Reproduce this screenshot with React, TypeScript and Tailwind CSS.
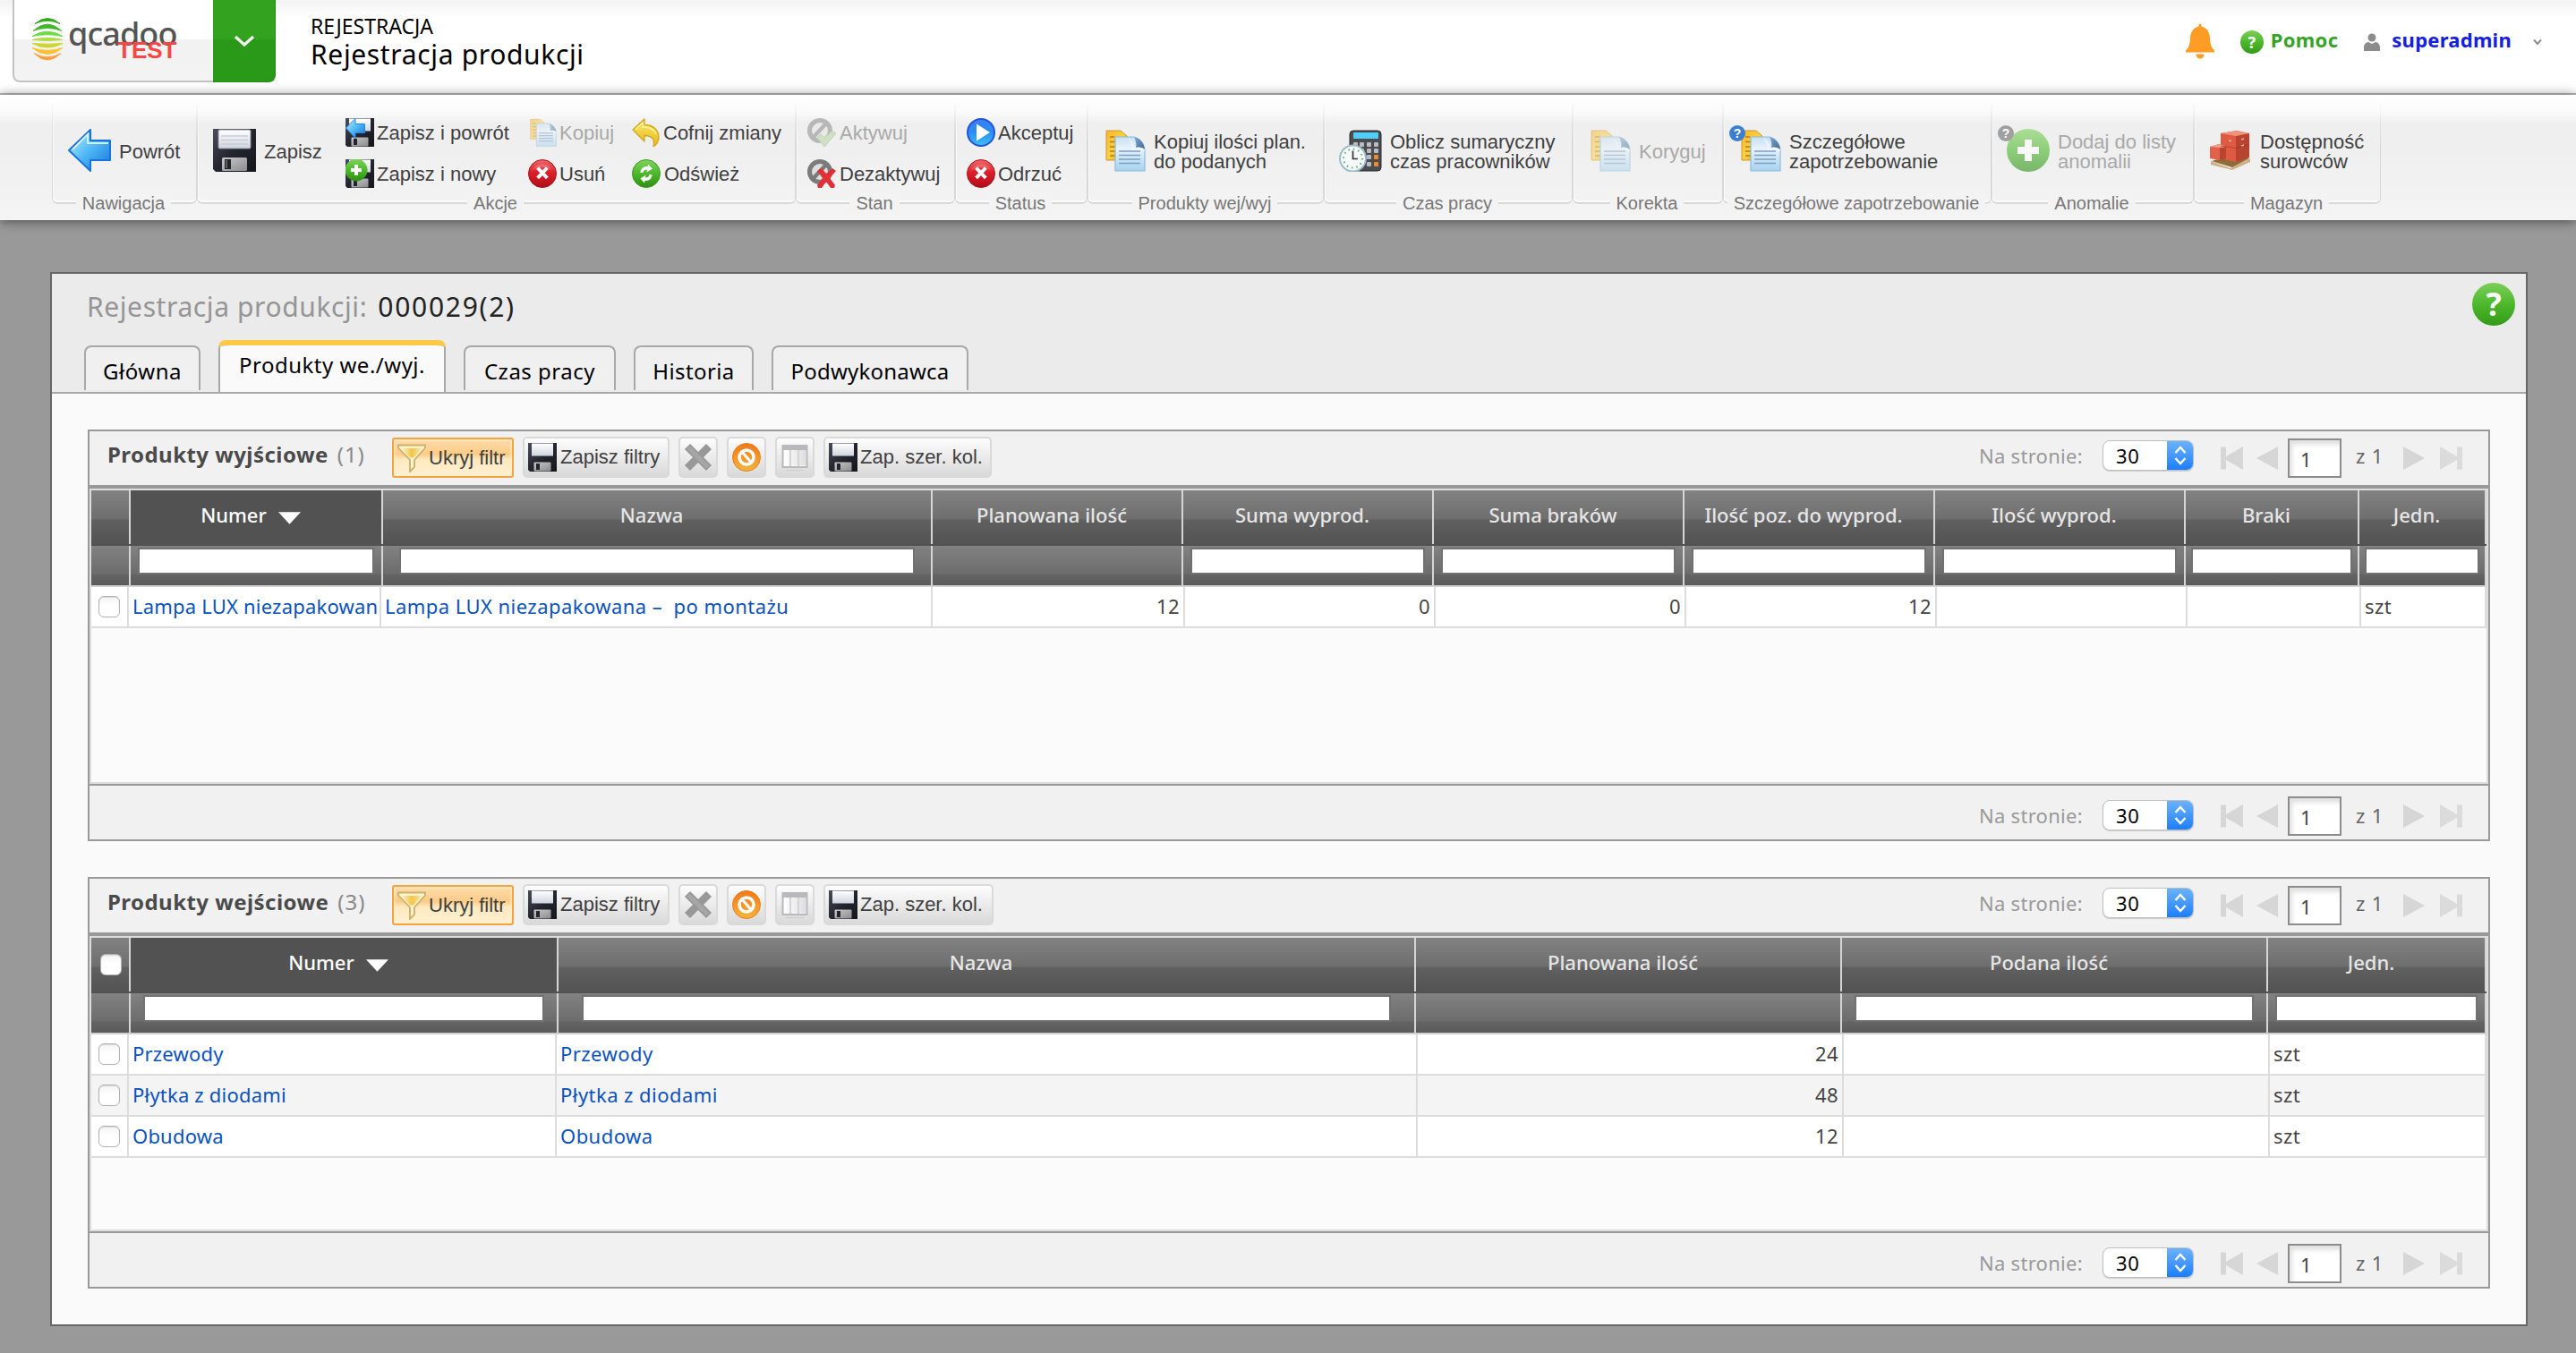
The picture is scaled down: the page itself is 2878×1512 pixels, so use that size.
import React, { ReactNode } from "react";

/* ---------- icons ---------- */

const Defs = () => (
  <svg className="absolute h-0 w-0" aria-hidden="true">
    <defs>
      <linearGradient id="blueArrow" x1="0" y1="0" x2="1" y2="1">
        <stop offset="0" stopColor="#c4f0ff" />
        <stop offset="0.5" stopColor="#4fb8f5" />
        <stop offset="1" stopColor="#1470dc" />
      </linearGradient>
      <linearGradient id="disk" x1="0" y1="0" x2="1" y2="1">
        <stop offset="0" stopColor="#4a4d5c" />
        <stop offset="0.5" stopColor="#23252f" />
        <stop offset="1" stopColor="#15161c" />
      </linearGradient>
      <linearGradient id="label" x1="0" y1="0" x2="0" y2="1">
        <stop offset="0" stopColor="#ffffff" />
        <stop offset="1" stopColor="#cfd6e0" />
      </linearGradient>
      <linearGradient id="metal" x1="0" y1="0" x2="1" y2="1">
        <stop offset="0" stopColor="#c8c8c8" />
        <stop offset="1" stopColor="#8c8c8c" />
      </linearGradient>
      <linearGradient id="green" x1="0" y1="0" x2="0" y2="1">
        <stop offset="0" stopColor="#7fd35c" />
        <stop offset="0.5" stopColor="#4cb82c" />
        <stop offset="1" stopColor="#2c8f12" />
      </linearGradient>
      <linearGradient id="red" x1="0" y1="0" x2="0" y2="1">
        <stop offset="0" stopColor="#ee6a6a" />
        <stop offset="0.45" stopColor="#dd1f2b" />
        <stop offset="1" stopColor="#b00d18" />
      </linearGradient>
      <linearGradient id="blue" x1="0" y1="0" x2="0" y2="1">
        <stop offset="0" stopColor="#3f7df5" />
        <stop offset="0.5" stopColor="#2a8df2" />
        <stop offset="1" stopColor="#3fc0fb" />
      </linearGradient>
      <linearGradient id="orange" x1="0" y1="0" x2="0" y2="1">
        <stop offset="0" stopColor="#f07818" />
        <stop offset="0.6" stopColor="#f79a2b" />
        <stop offset="1" stopColor="#f3b63c" />
      </linearGradient>
      <linearGradient id="gold" x1="0" y1="0" x2="0" y2="1">
        <stop offset="0" stopColor="#fbe96a" />
        <stop offset="1" stopColor="#e6b71c" />
      </linearGradient>
      <linearGradient id="paper" x1="0" y1="0" x2="0" y2="1">
        <stop offset="0" stopColor="#c6e0f2" />
        <stop offset="0.35" stopColor="#e9f3fb" />
        <stop offset="1" stopColor="#a4d3ee" />
      </linearGradient>
      <linearGradient id="fold" x1="0" y1="0" x2="1" y2="1">
        <stop offset="0" stopColor="#7fa6cc" />
        <stop offset="1" stopColor="#41699a" />
      </linearGradient>
      <linearGradient id="sheet" x1="0" y1="0" x2="1" y2="1">
        <stop offset="0" stopColor="#f9b42f" />
        <stop offset="0.5" stopColor="#f8d23e" />
        <stop offset="1" stopColor="#ef9c2b" />
      </linearGradient>
      <linearGradient id="funnel" x1="0" y1="0" x2="1" y2="0">
        <stop offset="0" stopColor="#fdf0c0" />
        <stop offset="0.5" stopColor="#f3c548" />
        <stop offset="1" stopColor="#fbe6a4" />
      </linearGradient>
      <linearGradient id="cell" x1="0" y1="0" x2="1" y2="0">
        <stop offset="0" stopColor="#ffffff" />
        <stop offset="1" stopColor="#dedee0" />
      </linearGradient>
    </defs>
  </svg>
);

const Svg = ({ size, className = "", children }: { size: 48 | 32; className?: string; children: ReactNode }) => (
  <svg viewBox={size === 48 ? "0 0 48 48" : "0 0 32 32"} className={`${size === 48 ? "size-12" : "size-8"} shrink-0 ${className}`}>
    {children}
  </svg>
);

const BackArrow = () => (
  <Svg size={48}>
    <path d="M1 24 25 1v12h22v22H25v12Z" fill="url(#blueArrow)" stroke="#1673e0" strokeWidth="2" strokeLinejoin="round" />
    <path d="M5 23 22 6v10h23" fill="none" stroke="#e9faff" strokeWidth="1.8" opacity=".85" />
  </Svg>
);

const DiskBig = () => (
  <Svg size={48}>
    <path d="M0 0h48v48H3l-3-3Z" fill="url(#disk)" />
    <rect x="6" y="1" width="36" height="21" rx="1.5" fill="url(#label)" stroke="#8b8f9c" />
    <path d="M9 8h30M9 12.500h30M9 17h30" stroke="#c9ccd2" strokeWidth="1.300" />
    <rect x="10" y="32" width="28" height="15" rx="1.500" fill="url(#metal)" />
    <rect x="13" y="34" width="7" height="11" fill="#22242c" />
    <rect x="14" y="35" width="2" height="9" fill="#5a5d68" />
  </Svg>
);

const DiskShape = () => (
  <>
    <path d="M0 0h32v32H2l-2-2Z" fill="url(#disk)" />
    <rect x="4" y="0.500" width="24" height="14" fill="url(#label)" />
    <rect x="6.500" y="21.500" width="19" height="10" rx="1" fill="url(#metal)" />
    <rect x="9" y="23" width="4" height="7" fill="#22242c" />
  </>
);
const Disk = () => (
  <Svg size={32}>
    <DiskShape />
  </Svg>
);
const DiskBack = () => (
  <Svg size={32}>
    <DiskShape />
    <path d="M0.500 11 11 0.500v6h10.500v10H11v6Z" fill="url(#blueArrow)" stroke="#2a86e4" />
  </Svg>
);
const DiskNew = () => (
  <Svg size={32}>
    <DiskShape />
    <circle cx="12" cy="12" r="12.500" fill="url(#green)" />
    <path d="M12 6v12M6 12h12" stroke="#fff" strokeWidth="4" />
  </Svg>
);

const CopyShape = () => (
  <>
    <path d="M4 2h16l7 6v27H4Z" fill="url(#sheet)" stroke="#d3962c" strokeWidth="1" />
    <path d="M8 9h5M8 14.500h6M8 20h6M8 25h6M8 30h6" stroke="#b87a1c" strokeWidth="1.600" />
    <path d="M14 9h21c7 2 12 8 12 16v22H14Z" fill="url(#paper)" stroke="#8fb9da" strokeWidth="1.200" />
    <path d="M35 9c7 2 11 7 12 14-3-2-6-3-10-2 1-4 0-8-2-12Z" fill="url(#fold)" />
    <path d="M28 10c5 3 7 7 6 13 4-3 9-3 13 0v2c-4-2-9-2-14 1 1-6-1-11-5-16Z" fill="#f4fafe" opacity=".8" />
    <path d="M18 25h24M18 29.500h24M18 34h24M18 38.500h24" stroke="#7c9dc4" strokeWidth="1.700" />
  </>
);
const CopyBig = ({ dim = false }: { dim?: boolean }) => (
  <Svg size={48} className={dim ? "opacity-50" : ""}>
    <CopyShape />
  </Svg>
);
const CopySmallDim = () => (
  <svg viewBox="0 0 48 48" className="size-8 shrink-0 opacity-50">
    <CopyShape />
  </svg>
);

const Delete = () => (
  <Svg size={32}>
    <circle cx="16" cy="16" r="15.500" fill="url(#red)" stroke="#a8111b" />
    <path d="M5 12a12 11 0 0 1 22 0c-6-4-16-4-22 0Z" fill="#fff" opacity=".18" />
    <path d="m12 11 8 8.500m0-8.500-8 8.500" stroke="#fff" strokeWidth="4" strokeLinecap="square" />
  </Svg>
);
const Undo = () => (
  <Svg size={32}>
    <path d="M1 13 14 1v6.500c10 0 16 6 16 14 0 5-3 9-6 10 2-7-1-12-10-12V26Z" fill="url(#gold)" stroke="#d3a51c" strokeWidth="1.300" strokeLinejoin="round" />
    <path d="m4 12.500 8-7V10c8 0 13 3 15 8" fill="none" stroke="#fff9b8" strokeWidth="1.300" opacity=".8" />
  </Svg>
);
const Refresh = () => (
  <Svg size={32}>
    <circle cx="16" cy="16" r="15.500" fill="url(#green)" stroke="#3a9a20" />
    <path d="M9.500 15c0-5 4-7.500 8-7l.500-2.500 5 5-6.500 4 .500-3c-3 0-4 1-4.500 3.500Z" fill="#fff" />
    <path d="M22.500 17c0 5-4 7.500-8 7l-.500 2.500-4.500-5 6-4-.500 3c3 0 4-1 4.500-3.500Z" fill="#fff" />
  </Svg>
);
const Activate = () => (
  <Svg size={32} className="opacity-50">
    <circle cx="14" cy="14" r="11.500" fill="#e4e4e4" stroke="#808080" strokeWidth="5" />
    <path d="m6.500 21.500 14-15" stroke="#808080" strokeWidth="4.500" />
    <path d="m11 22 4-4 4 4 9-8 4 3-13 15Z" fill="#b5d39a" stroke="#8db56c" />
  </Svg>
);
const Deactivate = () => (
  <Svg size={32}>
    <circle cx="14" cy="14" r="11.500" fill="#dedede" stroke="#7b7b7b" strokeWidth="5" />
    <path d="m6.500 21.500 14-15" stroke="#7b7b7b" strokeWidth="4.500" />
    <path d="m11 13 5-3 5 6 7-6 4 3-7 8 6 8-1 3h-4l-5-7-5 7h-4l-1-3 6-8Z" fill="#df3034" />
  </Svg>
);
const Accept = () => (
  <Svg size={32}>
    <circle cx="16" cy="16" r="15" fill="url(#blue)" stroke="#1f52d8" strokeWidth="2" />
    <path d="M11 6.500 26 16l-15 9.500Z" fill="#fff" />
  </Svg>
);

const Calculator = () => (
  <Svg size={48}>
    <rect x="12" y="2" width="35" height="45" rx="4" fill="#4a4c50" stroke="#2b2c2f" />
    <rect x="16" y="4" width="28" height="7" rx="1" fill="#52cdf7" />
    {[15, 22, 29, 37].map((y) =>
      [16, 23, 31, 39].map((x) => (
        <rect key={`${x}-${y}`} x={x} y={y} width="5" height="5" rx="1" fill={x === 39 && y > 22 ? "#f58a2c" : "#b9bcc2"} />
      )),
    )}
    <circle cx="15.500" cy="33" r="14.500" fill="#f5faf9" stroke="#9dbcc8" strokeWidth="2" />
    <circle cx="15.500" cy="33" r="10.500" fill="none" stroke="#57a86c" strokeWidth="2" strokeDasharray="1.500 4" />
    <path d="M15.500 24.500v9h5.500" fill="none" stroke="#333" strokeWidth="1.700" />
  </Svg>
);
const AddDim = () => (
  <Svg size={48} className="opacity-60">
    <circle cx="24" cy="24" r="24" fill="url(#green)" />
    <path d="M24 12v24M12 24h24" stroke="#fff" strokeWidth="8" />
  </Svg>
);
const Boxes = () => (
  <Svg size={48}>
    <path d="M2 36 24 44 46 33v4L26 46 2 40Z" fill="#cdb184" />
    <path d="m3 36 20-6 22 3-19 10Z" fill="#8f6b3a" />
    <path d="M13 5 31 2l14 3v27l-16 5-16-4Z" fill="#df5a42" />
    <path d="m30 8 15-3v27l-15 5Z" fill="#b8432e" />
    <path d="M13 5 31 2l14 3-15 3Z" fill="#ef937a" />
    <path d="m1 20 10-3 8 3v13l-8 2-10-2Z" fill="#e2614a" />
    <path d="m12 21 7-1v13l-7 2Z" fill="#b8432e" />
    <path d="m1 20 10-3 8 3-7 1Z" fill="#f29f88" />
    <path d="M13 19.500h4l13 2 15-4" fill="none" stroke="#94301c" opacity=".5" />
    <path d="m36 19 3-1M22 13l3 .500M36 12l3-1" stroke="#f6b39c" strokeWidth="1.500" />
  </Svg>
);

const Funnel = () => (
  <Svg size={32}>
    <path d="M1 1.500h30v3L19 18v8l-5 5V18L1 4.500Z" fill="#fdf3d0" stroke="#cdb06a" strokeWidth="1.800" />
    <path d="M5 5h22L18 15.500h-4Z" fill="url(#funnel)" />
  </Svg>
);
const CrossGray = () => (
  <Svg size={32}>
    <path d="m4 4 24 24M28 4 4 28" stroke="#989898" strokeWidth="8.500" />
    <path d="m5 5 22 22" stroke="#a6a6a6" strokeWidth="5" />
  </Svg>
);
const Forbid = () => (
  <Svg size={32}>
    <circle cx="16" cy="16" r="15.500" fill="url(#orange)" stroke="#e8811c" />
    <circle cx="16" cy="16" r="8" fill="none" stroke="#fff" strokeWidth="3.600" />
    <path d="m11.500 10.500 9.500 11" stroke="#fff" strokeWidth="3.200" />
  </Svg>
);
const Columns = () => (
  <Svg size={32}>
    <rect x="2.500" y="3" width="27" height="24" fill="#f7f7f7" stroke="#b9b9bb" strokeWidth="2" />
    <path d="M2 2h28v6H2Z" fill="#b9b9bd" />
    <path d="M4 8h6v17H4ZM12 8h7v17h-7ZM21 8h7v17h-7Z" fill="url(#cell)" />
    <path d="M11 8v18M20 8v18" stroke="#c9c9cb" strokeWidth="1.500" />
    <path d="M6 30.500h20" stroke="#d2d2d2" strokeWidth="1.500" />
  </Svg>
);

const Logo = () => (
  <svg viewBox="0 0 34 48" className="h-12 w-[34px] shrink-0" fill="none">
    <path d="M3 6.500Q17-5.500 31 6.500 17 0 3 6.500Z" fill="#35a81f" stroke="#35a81f" strokeWidth="1" />
    <path d="M1 14.500Q17-.5 33 14.500 17 8.500 1 14.500Z" fill="#43b629" stroke="#43b629" strokeWidth=".8" />
    <path d="M0 20.500Q17 10 34 20.500 17 17 0 20.500Z" fill="#6bdc45" stroke="#6bdc45" strokeWidth="1" />
    <path d="M0 24.500Q17 20 34 24.500 17 26.500 0 24.500Z" fill="#b3dc4d" stroke="#b3dc4d" strokeWidth="1" />
    <path d="M0 28.500Q17 30 34 28.500 17 37.500 0 28.500Z" fill="#cdd62c" stroke="#cdd62c" strokeWidth="1" />
    <path d="M0 33.500Q17 39 34 33.500 17 47.500 0 33.500Z" fill="#fcc02d" stroke="#fcc02d" strokeWidth=".8" />
    <path d="M2 39.500Q17 48 32 39.500 17 54.500 2 39.500Z" fill="#ff9c33" stroke="#ff9c33" strokeWidth=".8" />
  </svg>
);

const HelpDot = ({ className }: { className: string }) => (
  <span
    className={`flex items-center justify-center rounded-full bg-linear-to-b from-[#7ccf58] via-[#4cb82c] to-[#339a17] font-['Noto_Sans',sans-serif] font-bold text-white ${className}`}
  >
    ?
  </span>
);

/* ---------- ribbon ---------- */

const Group = ({ label, className, children }: { label: string; className: string; children: ReactNode }) => (
  <div className={`relative flex h-[114px] shrink-0 ${className}`}>
    <div className="pointer-events-none absolute inset-0 rounded-b-[6px] border-x border-b-2 border-[#d8d8d8] shadow-[inset_1px_-2px_0_#fbfbfb] mask-[linear-gradient(to_bottom,transparent,#000_40%)]" />
    {children}
    <div className="absolute inset-x-0 -bottom-[10px] flex h-[22px] justify-center pr-[2px]">
      <span className="bg-[#f3f3f3] px-[7px] text-[20px] leading-[22px] whitespace-nowrap text-[#777]">{label}</span>
    </div>
  </div>
);

const Big = ({ icon, lines, dim = false, badge, className = "" }: { icon: ReactNode; lines: string[]; dim?: boolean; badge?: string; className?: string }) => (
  <div className={`relative mt-[30px] flex h-12 items-center ${className}`}>
    {icon}
    {badge && (
      <span className={`absolute -top-1 -left-2.5 flex size-[18px] items-center justify-center rounded-full text-[14px] font-bold text-white ${badge}`}>?</span>
    )}
    <div className={`ml-[9px] pt-[3px] text-[22px] leading-[22px] whitespace-nowrap ${dim ? "text-[#a9a9a9]" : "text-[#404040]"}`}>
      {lines.map((l) => (
        <div key={l}>{l}</div>
      ))}
    </div>
  </div>
);

const Small = ({ icon, text, dim = false, gap = "gap-[3px]" }: { icon: ReactNode; text: string; dim?: boolean; gap?: string }) => (
  <div className={`flex h-8 items-center text-[22px] leading-8 whitespace-nowrap ${gap} ${dim ? "text-[#a9a9a9]" : "text-[#404040]"}`}>
    {icon}
    <span className="pt-[2px]">{text}</span>
  </div>
);

const Stack = ({ className, children }: { className: string; children: ReactNode }) => (
  <div className={`mt-[18px] flex flex-col gap-[14px] ${className}`}>{children}</div>
);

const Ribbon = () => (
  <div className="relative z-10 flex h-[140px] bg-[linear-gradient(#fff_0,#fafafa_20px,#efefef_32px,#efefef_60px,#f4f4f4_100%)] pt-[8px] pl-[58px] shadow-[0_1px_12px_rgba(0,0,0,0.55)]">
    <Group label="Nawigacja" className="w-[162px] pl-[18px]">
      <Big icon={<BackArrow />} lines={["Powrót"]} />
    </Group>
    <Group label="Akcje" className="w-[669px] pl-[18px]">
      <Big icon={<DiskBig />} lines={["Zapisz"]} className="w-[148px]" />
      <Stack className="w-[204px]">
        <Small icon={<DiskBack />} text="Zapisz i powrót" />
        <Small icon={<DiskNew />} text="Zapisz i nowy" />
      </Stack>
      <Stack className="w-[116px]">
        <Small icon={<CopySmallDim />} text="Kopiuj" dim />
        <Small icon={<Delete />} text="Usuń" />
      </Stack>
      <Stack className="">
        <Small icon={<Undo />} text="Cofnij zmiany" />
        <Small icon={<Refresh />} text="Odśwież" gap="gap-[4px]" />
      </Stack>
    </Group>
    <Group label="Stan" className="w-[178px] pl-[13px]">
      <Stack className="">
        <Small icon={<Activate />} text="Aktywuj" dim gap="gap-[4px]" />
        <Small icon={<Deactivate />} text="Dezaktywuj" gap="gap-[4px]" />
      </Stack>
    </Group>
    <Group label="Status" className="w-[148px] pl-[13px]">
      <Stack className="">
        <Small icon={<Accept />} text="Akceptuj" />
        <Small icon={<Delete />} text="Odrzuć" />
      </Stack>
    </Group>
    <Group label="Produkty wej/wyj" className="w-[264px] pl-[17px]">
      <Big icon={<CopyBig />} lines={["Kopiuj ilości plan.", "do podanych"]} />
    </Group>
    <Group label="Czas pracy" className="w-[278px] pl-[17px]">
      <Big icon={<Calculator />} lines={["Oblicz sumaryczny", "czas pracowników"]} />
    </Group>
    <Group label="Korekta" className="w-[168px] pl-[17px]">
      <Big icon={<CopyBig dim />} lines={["Koryguj"]} dim />
    </Group>
    <Group label="Szczegółowe zapotrzebowanie" className="w-[300px] pl-[17px]">
      <Big icon={<CopyBig />} lines={["Szczegółowe", "zapotrzebowanie"]} badge="bg-[#3b7fce]" />
    </Group>
    <Group label="Anomalie" className="w-[226px] pl-[17px]">
      <Big icon={<AddDim />} lines={["Dodaj do listy", "anomalii"]} dim badge="bg-[#a0a0a0]" />
    </Group>
    <Group label="Magazyn" className="w-[209px] pl-[17px]">
      <Big icon={<Boxes />} lines={["Dostępność", "surowców"]} />
    </Group>
  </div>
);

/* ---------- header ---------- */

const TopBar = () => (
  <div className="flex h-[106px] border-b-2 border-[#bdbdbd] bg-[linear-gradient(#f2f2f2,#fff_20px)] pl-[14px] font-['Noto_Sans',sans-serif]">
    <div className="flex h-[92px] w-[224px] rounded-bl-[8px] border-b-2 border-l-2 border-[#c4c4c4] bg-[linear-gradient(#fff_44px,#f2f2f2_44px,#f3f3f3)] pl-[20px]">
      <div className="mt-5">
        <Logo />
      </div>
      <div className="relative ml-[6px] h-full">
        <div className="mt-[14px] text-[36px] leading-[48px] font-medium tracking-[-0.9px] text-[#555]">qcadoo</div>
        <div className="absolute top-[41px] left-[55px] font-['Liberation_Sans',sans-serif] text-[26px] leading-[30px] font-bold text-[#fb4444]">TEST</div>
      </div>
    </div>
    <div className="flex h-[92px] w-[70px] items-center justify-center rounded-br-[8px] border-r border-b border-[#26891a] bg-[linear-gradient(#33a31f_44px,#2a991a_44px)]">
      <svg viewBox="0 0 24 14" className="h-[14px] w-6" fill="none">
        <path d="m2 2 10 9L22 2" stroke="#f2f5ee" strokeWidth="3.400" />
      </svg>
    </div>
    <div className="ml-[39px] flex flex-1 flex-col pt-[14px] text-black">
      <div className="text-[23px] leading-[30px]">REJESTRACJA</div>
      <div className="text-[30px] leading-[34px] tracking-[0.65px]">Rejestracja produkcji</div>
    </div>
    <div className="flex h-[88px] items-center pr-[38px] text-[22px] font-bold">
      <svg viewBox="0 0 32 40" className="mt-[4px] h-10 w-8" fill="#ff9c26">
        <path d="M14.500 2a1.500 1.500 0 0 1 3 0v1.500C23 5 26.500 9 27 16c.400 8 1 10 5 14.500v2H0v-2C4 26 4.600 24 5 16 5.500 9 9 5 14.500 3.500Z" />
        <path d="M11.500 34.500h9c0 3-2 5-4.500 5s-4.500-2-4.500-5Z" />
      </svg>
      <HelpDot className="mt-[6px] ml-[29px] size-[26px] text-[18px] leading-none" />
      <span className="ml-2 tracking-[0.3px] text-[#35a426]">Pomoc</span>
      <svg viewBox="0 0 18 20" className="mt-[5px] ml-[29px] h-5 w-[18px]" fill="#8c8c8c">
        <circle cx="9" cy="5" r="4.500" />
        <path d="M0 20v-4c0-4 3-6 5-6l4 2 4-2c2 0 5 2 5 6v4Z" />
      </svg>
      <span className="ml-[13px] tracking-[0.25px] text-[#1420e0]">superadmin</span>
      <svg viewBox="0 0 10 8" className="mt-[6px] ml-[24px] h-2 w-[10px]" fill="none">
        <path d="m1 1.500 4 4.500 4-4.500" stroke="#8c8c8c" strokeWidth="2" />
      </svg>
    </div>
  </div>
);

/* ---------- tabs ---------- */

const Tab = ({ label, className }: { label: string; className: string }) => (
  <div className={`flex h-[50px] justify-center rounded-t-[8px] border-2 border-b-0 border-[#a8a8a8] bg-[#f0f0f0] text-[24px] leading-[53px] whitespace-nowrap text-black ${className}`}>
    {label}
  </div>
);

/* ---------- grid ---------- */

const ToolButton = ({ className = "", children }: { className?: string; children: ReactNode }) => (
  <div className={`flex h-[46px] items-center rounded-[5px] border-2 border-[#d9d9d9] bg-linear-to-b from-[#fdfdfd] to-[#d9d9d9] text-[22px] whitespace-nowrap text-[#404040] ${className}`}>
    {children}
  </div>
);

const Arrow = ({ flip = false, bar = false, className }: { flip?: boolean; bar?: boolean; className: string }) => (
  <svg viewBox="0 0 25 26" className={`h-[26px] w-[25px] ${flip ? "-scale-x-100" : ""} ${className}`} fill="#d6d6d6">
    {bar ? <path d="M0 0.500h6V11L25 0v26L6 15v10.500H0Z" /> : <path d="M0 13 24 0v26Z" />}
  </svg>
);

const Pager = ({ footer = false }: { footer?: boolean }) => (
  <div className={`ml-auto flex items-start pr-[29px] text-[22px] font-['Noto_Sans',sans-serif] ${footer ? "pt-[12px]" : "pt-[8px]"}`}>
    <div className={`flex items-center ${footer ? "mt-[4px]" : "mt-[2px]"}`}>
      <span className="leading-[34px] tracking-[0.3px] text-[#999]">Na stronie:</span>
      <div className="ml-[22px] flex h-[34px] w-[102px] overflow-hidden rounded-[8px] border border-[#bfbfbf] bg-white shadow-[0_1px_1px_rgba(0,0,0,0.15)]">
        <span className="w-[72px] pl-[14px] leading-[32px] tracking-[0.6px] text-black">30</span>
        <span className="-my-px -mr-px flex h-[34px] w-[30px] items-center justify-center bg-linear-to-b from-[#6cb3fa] to-[#157cfc]">
          <svg viewBox="0 0 14 22" className="h-[22px] w-[14px]" fill="none" stroke="#fff" strokeWidth="2.400">
            <path d="m1.500 8 5.500-6 5.500 6M1.500 14l5.500 6 5.500-6" />
          </svg>
        </span>
      </div>
    </div>
    <Arrow bar className="mt-[9px] ml-[30px]" />
    <Arrow className="mt-[9px] ml-[15px]" />
    <div className="ml-[10px] h-[44px] w-[60px] border-2 border-[#8c8c8c] bg-white pl-[12px] leading-[43px] text-[#444] shadow-[inset_3px_5px_5px_rgba(0,0,0,0.12)]">1</div>
    <span className={`ml-[16px] w-[52px] leading-[34px] tracking-[0.8px] text-[#666] ${footer ? "mt-[4px]" : "mt-[2px]"}`}>z 1</span>
    <Arrow flip className="mt-[9px]" />
    <Arrow flip bar className="mt-[9px] ml-[17px] opacity-80" />
  </div>
);

const Check = ({ className = "" }: { className?: string }) => (
  <div className={`size-6 rounded-[6px] border border-[#b0b0b0] bg-linear-to-b from-[#f4f4f4] via-white to-white shadow-[inset_0_1px_1px_rgba(0,0,0,0.12)] ${className}`} />
);

type Column = {
  title: string;
  head: string;
  body: string;
  filter?: string;
  sorted?: boolean;
  kind?: "link" | "num";
};

const HEAD_BG = "bg-[linear-gradient(#828282_0,#6e6e6e_32px,#606060_33px,#525252_62px)]";
const FILTER_BG = "bg-[linear-gradient(#828282_0,#6c6c6c_31px,#646464_32px,#5a5a5a_44px)]";

const Grid = ({
  title,
  count,
  columns,
  rows,
  selectAll = false,
  className,
  lastButton,
}: {
  title: string;
  count: number;
  columns: Column[];
  rows: string[][];
  selectAll?: boolean;
  className: string;
  lastButton: string;
}) => (
  <div className={`flex w-[2684px] flex-col border-2 border-[#999] bg-[#fbfbfb] ${className}`}>
    <div className="flex h-[64px] shrink-0 items-start border-b-4 border-[#999] bg-[#f1f1f1] pl-[20px]">
      <div className="flex w-[318px] pt-[5px] font-['Noto_Sans',sans-serif] text-[24px] leading-[42px] tracking-[0.45px] whitespace-nowrap">
        <span className="font-bold text-[#4a4a4a]">{title}</span>
        <span className="ml-[10px] tracking-[1px] text-[#888]">({count})</span>
      </div>
      <div className="flex items-start gap-[10px] pt-[6px]">
        <div className="mt-px flex h-[45px] w-[136px] items-center rounded-[3px] border-2 border-[#f4a341] bg-[linear-gradient(#fddcab_0,#fccb86_40%,#fee9bf_55%,#fff0d0)] pl-[4px] text-[22px] whitespace-nowrap text-[#404040] shadow-[inset_0_0_0_2px_rgba(255,240,200,0.5)]">
          <Funnel />
          <span className="ml-[3px] pb-px">Ukryj filtr</span>
        </div>
        <ToolButton className="w-[164px] pl-[4px]">
          <Disk />
          <span className="ml-[4px] pb-px">Zapisz filtry</span>
        </ToolButton>
        <ToolButton className="w-11 justify-center">
          <CrossGray />
        </ToolButton>
        <ToolButton className="w-11 justify-center">
          <Forbid />
        </ToolButton>
        <ToolButton className="w-11 justify-center">
          <Columns />
        </ToolButton>
        <ToolButton className={`pl-[4px] ${lastButton}`}>
          <Disk />
          <span className="ml-[3px] pb-px">Zap. szer. kol.</span>
        </ToolButton>
      </div>
      <Pager />
    </div>

    <div className="flex flex-1 flex-col border-2 border-[#ddd] font-['Noto_Sans',sans-serif] text-[22px]">
      <div className={`flex h-[62px] font-medium ${HEAD_BG}`}>
        <div className="h-[60px] w-[44px] border-r-2 border-[#d6d6d6] pt-[18px] pl-[10px]">{selectAll && <Check />}</div>
        {columns.map((c) => (
          <div key={c.title} className={`flex h-[62px] ${c.head} ${c.sorted ? "bg-[#525252] text-white" : "text-[#e6e6e6]"}`}>
            <div className="flex h-[60px] flex-1 items-center justify-center border-r-2 border-[#d6d6d6] pr-[12px] pb-[6px] whitespace-nowrap">
              {c.title}
              {c.sorted && (
                <svg viewBox="0 0 26 14" className="mt-[8px] ml-[13px] h-[14px] w-[25px]" fill="#fff">
                  <path d="M0 0h26L13 14Z" />
                </svg>
              )}
            </div>
          </div>
        ))}
      </div>
      <div className={`flex h-[46px] border-b-2 border-[#d0d0d0] ${FILTER_BG} bg-origin-border`}>
        <div className="w-[44px] border-r-2 border-[#d6d6d6]" />
        {columns.map((c) => (
          <div key={c.title} className={`border-r-2 border-[#d6d6d6] pt-[4px] ${c.head} ${c.filter ?? ""}`}>
            {c.filter && <div className="h-[26px] bg-white shadow-[0_0_0_2px_#717171]" />}
          </div>
        ))}
      </div>
      {rows.map((r, i) => (
        <div key={r[0]} className={`flex h-[46px] border-b-2 border-[#ddd] ${i % 2 ? "bg-[#f4f4f4]" : "bg-white"}`}>
          <div className="w-[42px] border-r-2 border-[#ddd] pt-[10px] pl-[8px]">
            <Check />
          </div>
          {columns.map((c, j) => (
            <div
              key={c.title}
              className={`overflow-hidden border-r-2 border-[#ddd] leading-[43px] whitespace-pre ${c.body} ${
                c.kind === "link" ? "pl-[4px] text-[#0b52bd]" : "px-[4px] tracking-[0.4px] text-[#444]"
              } ${c.kind === "link" ? (c.sorted ? "tracking-[0.2px]" : "tracking-[0.45px]") : ""} ${c.kind === "num" ? "text-right" : ""}`}
            >
              {r[j]}
            </div>
          ))}
        </div>
      ))}
    </div>

    <div className="flex h-[62px] shrink-0 border-t-2 border-[#999] bg-[#f1f1f1]">
      <Pager footer />
    </div>
  </div>
);

const OUTPUT_COLUMNS: Column[] = [
  { title: "Numer", head: "w-[282px]", body: "w-[282px]", filter: "px-[10px]", sorted: true, kind: "link" },
  { title: "Nazwa", head: "w-[614px]", body: "w-[616px]", filter: "px-[20px]", kind: "link" },
  { title: "Planowana ilość", head: "w-[280px]", body: "w-[282px]", kind: "num" },
  { title: "Suma wyprod.", head: "w-[280px]", body: "w-[280px]", filter: "px-[10px]", kind: "num" },
  { title: "Suma braków", head: "w-[280px]", body: "w-[280px]", filter: "px-[10px]", kind: "num" },
  { title: "Ilość poz. do wyprod.", head: "w-[280px]", body: "w-[280px]", filter: "px-[10px]", kind: "num" },
  { title: "Ilość wyprod.", head: "w-[280px]", body: "w-[280px]", filter: "px-[10px]", kind: "num" },
  { title: "Braki", head: "w-[194px]", body: "w-[194px]", filter: "px-[8px]", kind: "num" },
  { title: "Jedn.", head: "w-[142px]", body: "w-[140px]", filter: "px-[8px]" },
];

const INPUT_COLUMNS: Column[] = [
  { title: "Numer", head: "w-[478px]", body: "w-[478px]", filter: "px-[16px]", sorted: true, kind: "link" },
  { title: "Nazwa", head: "w-[958px]", body: "w-[962px]", filter: "px-[28px]", kind: "link" },
  { title: "Planowana ilość", head: "w-[476px]", body: "w-[476px]", kind: "num" },
  { title: "Podana ilość", head: "w-[476px]", body: "w-[476px]", filter: "px-[16px]", kind: "num" },
  { title: "Jedn.", head: "w-[244px]", body: "w-[242px]", filter: "px-[10px]" },
];

export default function App() {
  return (
    <div className="flex h-[1512px] w-[2878px] flex-col overflow-hidden bg-[#999] font-['Liberation_Sans',Arial,sans-serif]">
      <Defs />
      <TopBar />
      <Ribbon />
      <div className="mt-[58px] ml-[56px] flex h-[1178px] w-[2768px] flex-col border-2 border-[#666] bg-[#fafafa]">
        <div className="flex h-[134px] shrink-0 flex-col border-b-2 border-[#a8a8a8] bg-[#ebebeb] font-['Noto_Sans',sans-serif]">
          <div className="flex h-[76px] items-start pr-[12px] pl-[39px]">
            <div className="flex pt-[15px] text-[30px] leading-[44px]">
              <span className="tracking-[0.6px] text-[#959595]">Rejestracja produkcji:</span>
              <span className="ml-[12px] tracking-[1.7px] text-[#222]">000029(2)</span>
            </div>
            <HelpDot className="mt-[10px] ml-auto size-12 text-[36px] leading-none" />
          </div>
          <div className="flex h-[58px] items-end gap-[20px] pl-[36px] tracking-[0.2px]">
            <Tab label="Główna" className="mb-[2px] w-[130px] tracking-[0.5px]" />
            <div className="flex h-[58px] w-[254px] justify-center overflow-hidden rounded-t-[8px] border-t-[6px] border-t-[#ffc945] bg-[#fafafa] text-[24px] leading-[44px] tracking-[0.5px] whitespace-nowrap text-black shadow-[inset_2px_0_0_#a8a8a8,inset_-2px_0_0_#a8a8a8]">
              Produkty we./wyj.
            </div>
            <Tab label="Czas pracy" className="mb-[2px] w-[170px] tracking-[0.5px]" />
            <Tab label="Historia" className="mb-[2px] w-[134px] tracking-[0.4px]" />
            <Tab label="Podwykonawca" className="mb-[2px] w-[220px]" />
          </div>
        </div>
        <div className="flex flex-col gap-[40px] pt-[40px] pl-[40px]">
          <Grid
            title="Produkty wyjściowe"
            count={1}
            columns={OUTPUT_COLUMNS}
            rows={[["Lampa LUX niezapakowan", "Lampa LUX niezapakowana –  po montażu", "12", "0", "0", "12", "", "", "szt"]]}
            className="h-[460px]"
            lastButton="w-[188px]"
          />
          <Grid
            title="Produkty wejściowe"
            count={3}
            columns={INPUT_COLUMNS}
            rows={[
              ["Przewody", "Przewody", "24", "", "szt"],
              ["Płytka z diodami", "Płytka z diodami", "48", "", "szt"],
              ["Obudowa", "Obudowa", "12", "", "szt"],
            ]}
            selectAll
            className="h-[460px]"
            lastButton="w-[190px]"
          />
        </div>
      </div>
    </div>
  );
}
